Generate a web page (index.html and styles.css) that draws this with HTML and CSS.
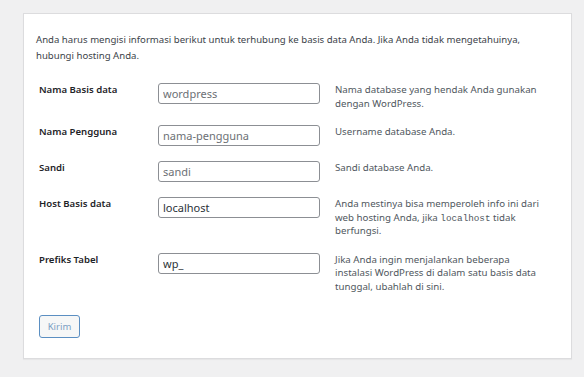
FILE: index.html
```html
<!DOCTYPE html>
<html lang="id">
<head>
    <meta charset="UTF-8">
    <meta name="viewport" content="width=device-width, initial-scale=1.0">
    <title>Pengaturan Konfigurasi WordPress</title>
    <link rel="stylesheet" href="styles.css">
</head>
<body>
    <div class="setup-card">
        <p class="intro">Anda harus mengisi informasi berikut untuk terhubung ke basis data Anda. Jika Anda tidak mengetahuinya, hubungi hosting Anda.</p>
        <form class="db-form" action="#" method="post">
            <div class="field-row">
                <label class="field-label" for="dbname">Nama Basis data</label>
                <input class="field-input" name="dbname" id="dbname" type="text" placeholder="wordpress">
                <p class="field-desc">Nama database yang hendak Anda gunakan dengan WordPress.</p>
            </div>
            <div class="field-row">
                <label class="field-label" for="uname">Nama Pengguna</label>
                <input class="field-input" name="uname" id="uname" type="text" placeholder="nama-pengguna">
                <p class="field-desc">Username database Anda.</p>
            </div>
            <div class="field-row">
                <label class="field-label" for="pwd">Sandi</label>
                <input class="field-input" name="pwd" id="pwd" type="text" placeholder="sandi">
                <p class="field-desc">Sandi database Anda.</p>
            </div>
            <div class="field-row">
                <label class="field-label" for="dbhost">Host Basis data</label>
                <input class="field-input" name="dbhost" id="dbhost" type="text" value="localhost">
                <p class="field-desc">Anda mestinya bisa memperoleh info ini dari web hosting Anda, jika <code>localhost</code> tidak berfungsi.</p>
            </div>
            <div class="field-row">
                <label class="field-label" for="prefix">Prefiks Tabel</label>
                <input class="field-input" name="prefix" id="prefix" type="text" value="wp_">
                <p class="field-desc">Jika Anda ingin menjalankan beberapa instalasi WordPress di dalam satu basis data tunggal, ubahlah di sini.</p>
            </div>
            <div class="form-actions">
                <button class="submit-btn" type="submit">Kirim</button>
            </div>
        </form>
    </div>
</body>
</html>
```

FILE: styles.css
```css
body {
    font-family: "Noto Sans", "Open Sans", sans-serif;
    background-color: #f0f0f1;
    color: #3c434a;
    margin: 0;
    padding: 13px 12px 19px 23px;
}

.setup-card {
    background-color: #ffffff;
    border: 1px solid #dcdcde;
    box-shadow: 0 1px 1px rgba(0, 0, 0, 0.04);
    padding: 18px 12px 20px 12px;
}

.intro {
    margin: 0 0 19px;
    font-size: 9.6px;
    line-height: 16px;
}

.db-form {
    display: flex;
    flex-direction: column;
    gap: 15px;
    padding-left: 3px;
}

.field-row {
    display: grid;
    grid-template-columns: 104px 162px 213px;
    column-gap: 15px;
    align-items: start;
}

.field-label {
    font-size: 9.6px;
    font-weight: 600;
    line-height: 14px;
    color: #1d2327;
}

.field-input {
    box-sizing: border-box;
    height: 21px;
    width: 162px;
    margin: 0;
    padding: 0 4px;
    font-family: inherit;
    font-size: 11px;
    color: #2c3338;
    background-color: #ffffff;
    border: 1px solid #8c8f94;
    border-radius: 3px;
}

.field-input::placeholder {
    color: #6c7075;
}

.field-desc {
    margin: 0;
    font-size: 9.7px;
    line-height: 13.5px;
    color: #50575e;
}

.field-desc code {
    font-family: "Liberation Mono", "DejaVu Sans Mono", monospace;
    font-size: 9.3px;
    line-height: 1;
}

.form-actions {
    padding-top: 5px;
}

.submit-btn {
    box-sizing: border-box;
    height: 23px;
    width: 41px;
    padding: 0;
    font-family: inherit;
    font-size: 9.5px;
    color: #7b9fc4;
    background-color: #f6f7f7;
    border: 1px solid #5b8fc2;
    border-radius: 3px;
    cursor: pointer;
}
```
